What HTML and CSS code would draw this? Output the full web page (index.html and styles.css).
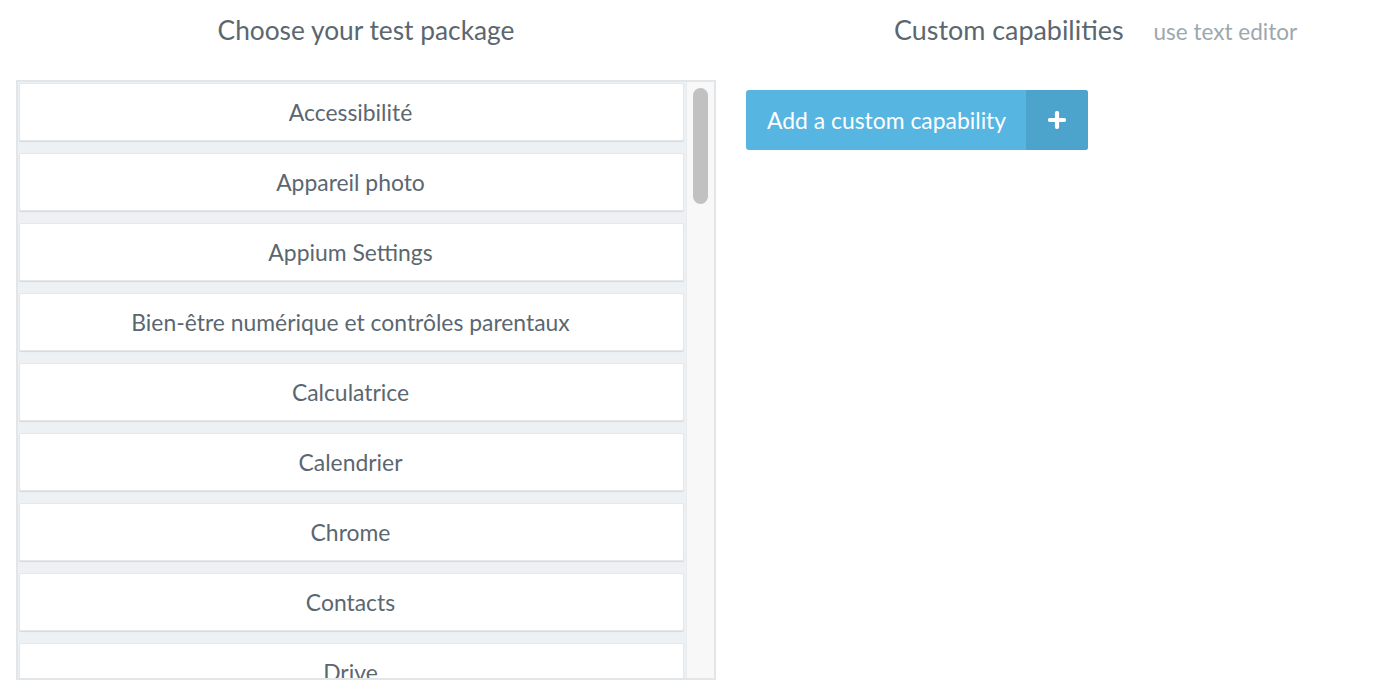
FILE: index.html
```html
<!DOCTYPE html>
<html>
<head>
<meta charset="utf-8">
<link rel="stylesheet" href="styles.css">
</head>
<body>
<div class="page">
  <section class="left">
    <h2 class="title">Choose your test package</h2>
    <div class="list">
      <div class="items">
        <div class="item">Accessibilité</div>
        <div class="item">Appareil photo</div>
        <div class="item">Appium Settings</div>
        <div class="item">Bien-être numérique et contrôles parentaux</div>
        <div class="item">Calculatrice</div>
        <div class="item">Calendrier</div>
        <div class="item">Chrome</div>
        <div class="item">Contacts</div>
        <div class="item">Drive</div>
      </div>
      <div class="track"><div class="thumb"></div></div>
    </div>
  </section>
  <section class="right">
    <div class="right-head">
      <h2 class="title">Custom capabilities</h2>
      <span class="editor-link">use text editor</span>
    </div>
    <button class="add-btn"><span class="add-label">Add a custom capability</span><span class="add-plus"><svg width="18" height="18" viewBox="0 0 18 18"><path d="M9 2v14M2 9h14" stroke="#fff" stroke-width="4.2" stroke-linecap="round"/></svg></span></button>
  </section>
</div>
</body>
</html>
```
FILE: styles.css
```css
* { box-sizing: border-box; }
body {
  margin: 0;
  font-family: "Lato", "Open Sans", sans-serif;
  background: #fff;
  color: #5b6770;
}
.page {
  display: flex;
  padding-left: 16px;
}
.left {
  width: 700px;
  display: flex;
  flex-direction: column;
}
.title {
  margin: 0;
  font-weight: 400;
  font-size: 26.3px;
  color: #5b6770;
}
.left > .title {
  height: 80px;
  padding-top: 14px;
  line-height: 32px;
  text-align: center;
}
.list {
  height: 600px;
  border: 2px solid #e2e6e9;
  display: flex;
  overflow: hidden;
  background: #eef1f3;
}
.items {
  flex: 1;
  padding: 1px 2px 0 1px;
  display: flex;
  flex-direction: column;
  gap: 12px;
  overflow: hidden;
}
.item {
  flex: 0 0 58px;
  background: #fff;
  border: 1px solid #e4e8eb;
  border-radius: 2px;
  box-shadow: 0 1px 1px #d3d9dd;
  display: flex;
  align-items: center;
  justify-content: center;
  padding-right: 2px;
  font-size: 22.9px;
  color: #5b6770;
}
.track {
  width: 28px;
  background: #f8f8f8;
  border-left: 1px solid #e9ecee;
  padding: 6px 6px 0 6px;
}
.thumb {
  height: 116px;
  background: #c1c1c1;
  border-radius: 8px;
}
.right {
  padding-left: 30px;
  display: flex;
  flex-direction: column;
}
.right-head {
  height: 90px;
  padding-top: 14px;
  padding-left: 148px;
  display: flex;
  align-items: baseline;
  gap: 30px;
}
.right-head .title {
  font-size: 26.9px;
  line-height: 32px;
}
.editor-link {
  font-size: 22.5px;
  color: #9ca7ae;
}
.add-btn {
  align-self: flex-start;
  display: flex;
  height: 60px;
  width: 342px;
  padding: 0;
  border: 0;
  border-radius: 3px;
  overflow: hidden;
  background: #57b5e1;
  font-family: inherit;
  cursor: pointer;
}
.add-label {
  flex: 1;
  display: flex;
  align-items: center;
  padding-left: 21px;
  padding-bottom: 1px;
  font-size: 22.9px;
  color: #fff;
}
.add-plus {
  width: 62px;
  display: flex;
  align-items: center;
  justify-content: center;
  background: #4ca4cd;
}
```
